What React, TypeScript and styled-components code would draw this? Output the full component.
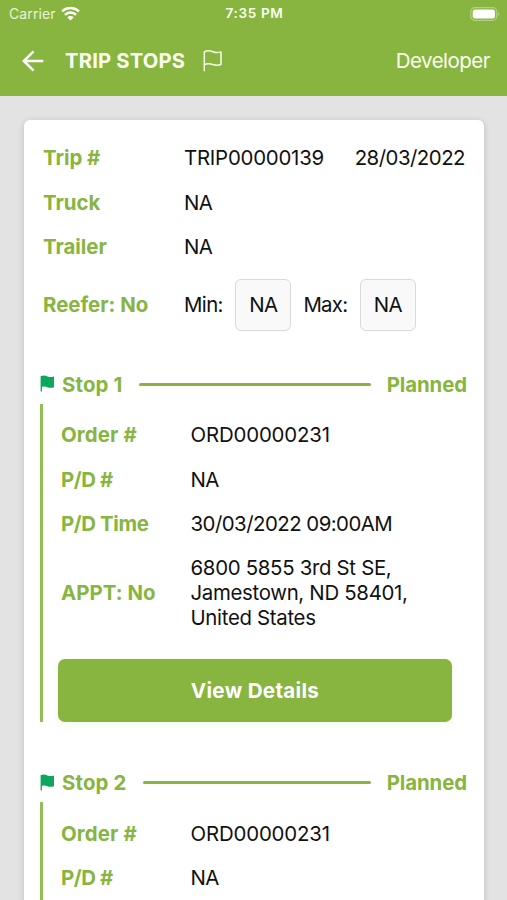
import React from "react";
import styled, { createGlobalStyle } from "styled-components";

const green = "#87b540";

const GlobalStyle = createGlobalStyle`
  * { box-sizing: border-box; }
  body {
    margin: 0;
    background: #e3e3e3;
    font-family: Inter, "Liberation Sans", sans-serif;
    font-size: 20.4px;
    line-height: 25px;
    color: #111;
    overflow: hidden;
  }
`;

const Screen = styled.div`
  width: 507px;
  height: 900px;
  overflow: hidden;
  display: flex;
  flex-direction: column;
`;

const Header = styled.header`
  flex: none;
  height: 96px;
  background: ${green};
  color: #fbfff0;
`;

const StatusBar = styled.div`
  height: 27px;
  padding: 0 7px 0 9px;
  display: grid;
  grid-template-columns: 1fr auto 1fr;
  align-items: center;
  font-size: 14px;
  line-height: 27px;
`;

const Carrier = styled.div`
  display: flex;
  align-items: center;
  gap: 5.5px;
  letter-spacing: 0.1px;
`;

const CarrierName = styled.span`
  opacity: 0.85;
`;

const Clock = styled.div`
  font-size: 13.6px;
  font-weight: 600;
  letter-spacing: 0.6px;
`;

const Battery = styled.svg`
  justify-self: end;
`;

const NavBar = styled.div`
  height: 68px;
  padding: 0 17px 0 21px;
  display: flex;
  align-items: center;
`;

const Title = styled.h1`
  margin: -1px 0 0 20px;
  font-size: 20.2px;
  font-weight: 700;
  letter-spacing: 0.2px;
  white-space: nowrap;
`;

const FlagOutline = styled.svg`
  margin-left: 17px;
`;

const Role = styled.div`
  margin: -1px 0 0 auto;
  font-size: 20.5px;
  letter-spacing: -0.52px;
`;

const Body = styled.main`
  padding: 24px 23px 0 24px;
`;

const Card = styled.section`
  height: 900px;
  padding: 25.4px 17px 0 19px;
  background: #fff;
  border-radius: 6px;
  box-shadow: 0 1px 6px rgba(0, 0, 0, 0.16);
`;

const Row = styled.div<{ $labelWidth: number }>`
  display: grid;
  grid-template-columns: ${(p) => p.$labelWidth}px 1fr;
  align-items: center;
  margin-bottom: 19.4px;
`;

const Text = styled.span<{ $track?: number }>`
  letter-spacing: ${(p) => p.$track ?? 0}px;
  white-space: pre-line;
`;

const Label = styled(Text)`
  color: ${green};
  font-weight: 650;
`;

const TripValue = styled.div`
  display: flex;
  justify-content: space-between;
  padding-right: 2px;
`;

const Temperatures = styled.div`
  display: flex;
  align-items: center;
`;

const TempBox = styled.div`
  width: 56px;
  height: 52px;
  margin: 0 12px 0 12.5px;
  display: flex;
  align-items: center;
  justify-content: center;
  background: #f9f9f9;
  border: 1.5px solid #d9d9d9;
  border-radius: 6px;
  letter-spacing: -0.5px;
`;

const ReeferRow = styled(Row)`
  margin-bottom: 41.2px;
`;

const StopHead = styled.div`
  display: flex;
  align-items: center;
  height: 25px;
  margin-left: -3px;
`;

const StopFlag = styled.svg`
  margin: -1px 7.5px 0 -0.5px;
  flex: none;
`;

const Rule = styled.div`
  flex: 1;
  height: 2.6px;
  margin: 0 16px;
  border-radius: 2px;
  background: ${green};
`;

const StopBody = styled.div`
  margin: 7px 0 48.5px -3px;
  height: 318px;
  padding: 18.5px 0 0 18px;
  border-left: 3px solid #94bd55;
`;

const Details = styled.button`
  display: block;
  width: 394px;
  height: 63px;
  margin: 28.5px 0 0 -3px;
  padding: 0;
  border: 0;
  border-radius: 7px;
  background: ${green};
  color: #fff;
  font: 700 20.6px Inter, sans-serif;
  letter-spacing: 0.3px;
  box-shadow: 0 2px 8px rgba(135, 181, 64, 0.1);
`;

type Entry = { label: string; value: string; lt: number; vt: number };

type StopData = { name: string; entries: Entry[]; complete: boolean };

const orderEntries: Entry[] = [
  { label: "Order #", value: "ORD00000231", lt: 0.15, vt: -0.15 },
  { label: "P/D #", value: "NA", lt: -0.4, vt: -0.5 },
];

const scheduleEntries: Entry[] = [
  { label: "P/D Time", value: "30/03/2022 09:00AM", lt: -0.4, vt: -0.52 },
  {
    label: "APPT: No",
    value: "6800 5855 3rd St SE,\nJamestown, ND 58401,\nUnited States",
    lt: 0.05,
    vt: -0.31,
  },
];

const stops: StopData[] = [
  { name: "Stop 1", entries: [...orderEntries, ...scheduleEntries], complete: true },
  { name: "Stop 2", entries: orderEntries, complete: false },
];

function Stop({ name, entries, complete }: StopData) {
  return (
    <>
      <StopHead>
        <StopFlag width="15" height="17" viewBox="0 0 15 17">
          <path d="M.6 1.3C3.6.1 5.2.5 7.4 1.4c2.2.8 4 .8 6.6.1v10.7c-2.6.9-4.6.8-6.6 0-2-.7-3.6-.8-5.5-.2V16.5H.6Z" fill="#0ca75c" />
        </StopFlag>
        <Label $track={0.15}>{name}</Label>
        <Rule />
        <Label $track={-0.1}>Planned</Label>
      </StopHead>
      <StopBody>
        {entries.map((e) => (
          <Row key={e.label} $labelWidth={129.5}>
            <Label $track={e.lt}>{e.label}</Label>
            <Text $track={e.vt}>{e.value}</Text>
          </Row>
        ))}
        {complete && <Details>View Details</Details>}
      </StopBody>
    </>
  );
}

export default function App() {
  return (
    <Screen>
      <GlobalStyle />
      <Header>
        <StatusBar>
          <Carrier>
            <CarrierName>Carrier</CarrierName>
            <svg width="19" height="14" viewBox="0 0 19 14" fill="none" stroke="#fff" strokeWidth="2.6">
              <path d="M1.1 4.4a12 12 0 0 1 16.8 0M4 7.8a7.8 7.8 0 0 1 11 0" />
              <path d="M9.5 13.6 6.3 10.3a4.6 4.6 0 0 1 6.4 0Z" fill="#fff" stroke="none" />
            </svg>
          </Carrier>
          <Clock>7:35 PM</Clock>
          <Battery width="30" height="14" viewBox="0 0 30 14">
            <rect x=".8" y=".7" width="26" height="12.6" rx="4" fill="none" stroke="#b3d083" strokeWidth="1.2" />
            <rect x="2.7" y="2.6" width="22.3" height="8.8" rx="2.2" fill="#fff" />
            <path d="M28.2 4.9c1.7.8 1.7 3.4 0 4.2Z" fill="#b3d083" />
          </Battery>
        </StatusBar>
        <NavBar>
          <svg width="24" height="24" viewBox="0 0 24 24" fill="none" stroke="#fff" strokeWidth="2.5">
            <path d="M22.3 12H3M12.6 2.3 2.8 12l9.8 9.7" />
          </svg>
          <Title>TRIP STOPS</Title>
          <FlagOutline width="22" height="24" viewBox="0 0 22 24" fill="none" stroke="#f6ffe6" strokeWidth="1.5" strokeLinejoin="round" strokeLinecap="round">
            <path d="M2.3 21.8V3C5.3 1.2 8.2 1.7 10.8 2.7c2.6 1 5.2 1.1 8.2.2v12.6c-3 1.1-5.6.9-8.2 0-2.8-1.1-5.7-1.2-8.5 0" />
          </FlagOutline>
          <Role>Developer</Role>
        </NavBar>
      </Header>
      <Body>
        <Card>
          <Row $labelWidth={141}>
            <Label>Trip #</Label>
            <TripValue>
              <Text $track={-0.22}>TRIP00000139</Text>
              <Text $track={-0.5}>28/03/2022</Text>
            </TripValue>
          </Row>
          <Row $labelWidth={141}>
            <Label>Truck</Label>
            <Text $track={-0.5}>NA</Text>
          </Row>
          <Row $labelWidth={141}>
            <Label>Trailer</Label>
            <Text $track={-0.5}>NA</Text>
          </Row>
          <ReeferRow $labelWidth={141}>
            <Label>Reefer: No</Label>
            <Temperatures>
              <Text $track={-0.6}>Min:</Text>
              <TempBox>NA</TempBox>
              <Text $track={-0.7}>Max:</Text>
              <TempBox>NA</TempBox>
            </Temperatures>
          </ReeferRow>
          {stops.map((stop) => (
            <Stop key={stop.name} {...stop} />
          ))}
        </Card>
      </Body>
    </Screen>
  );
}
